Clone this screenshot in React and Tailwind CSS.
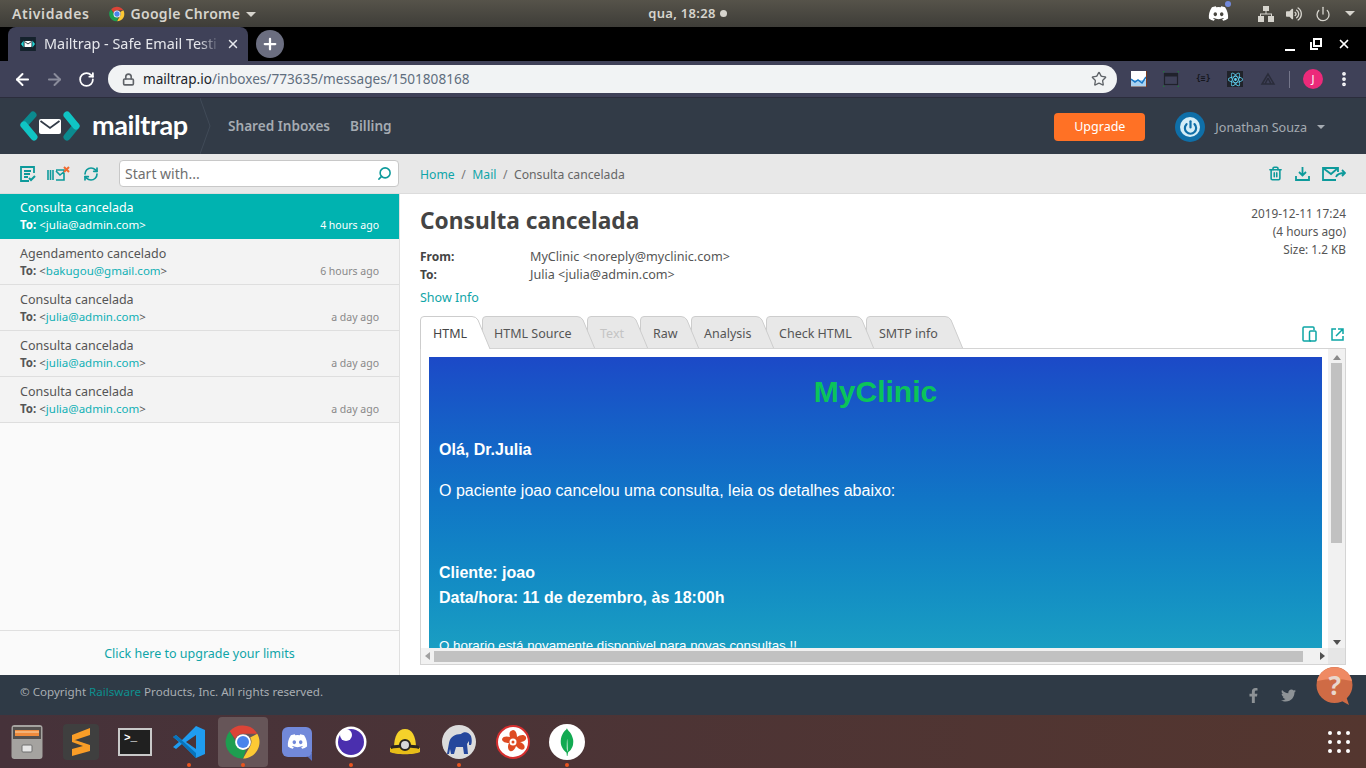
import React from "react";
import { ArrowLeft, ArrowRight, RotateCw, RefreshCw, Lock, X, Plus, Star, Power, Trash2, Search, EllipsisVertical } from "lucide-react";
import { FaDiscord, FaFacebookF, FaTwitter, FaVolumeUp } from "react-icons/fa";
import { SiMongodb, SiReact } from "react-icons/si";

const UI = { fontFamily: '"Noto Sans", sans-serif' };

function Chrome({ size }) {
  return (
    <svg width={size} height={size} viewBox="0 0 48 48">
      <path d="M24 2a22 22 0 0 1 19.05 11H24a11 11 0 0 0-10.2 6.9L6.2 9.6A22 22 0 0 1 24 2z" fill="#db4437" />
      <path d="M43.05 13A22 22 0 0 1 24 46l9.5-16.5A11 11 0 0 0 33.5 18z" fill="#fcc934" />
      <path d="M24 46A22 22 0 0 1 6.2 9.6l9.5 16.5A11 11 0 0 0 28 34.3z" fill="#1e9e50" />
      <circle cx="24" cy="24" r="10.5" fill="#fff" />
      <circle cx="24" cy="24" r="8" fill="#4a84ec" />
    </svg>
  );
}

function TopBar() {
  return (
    <div className="flex h-[27px] items-center bg-gradient-to-b from-[#56534a] to-[#3e3d38] text-[14px] tracking-[0.6px] text-[#d6d4cd]" style={UI}>
      <span className="ml-3 font-semibold">Atividades</span>
      <span className="ml-[20px] flex items-center">
        <Chrome size={16} />
        <span className="ml-[5px] font-semibold tracking-[0.3px]">Google Chrome</span>
        <span className="ml-[6px] mt-px h-0 w-0 border-x-[5px] border-t-[5px] border-x-transparent border-t-[#d6d4cd]" />
      </span>
      <span className="ml-[392px] flex items-center whitespace-nowrap text-[13px] font-semibold tracking-[0.3px]">
        qua, 18:28
        <span className="ml-[4px] h-[7px] w-[7px] rounded-full bg-[#d6d4cd]" />
      </span>
      <span className="relative ml-auto">
        <FaDiscord size={21} className="text-white" />
        <span className="absolute -right-0.5 -top-0.5 h-[6px] w-[6px] rounded-full bg-[#7289da]" />
      </span>
      <svg className="ml-[29px]" width="16" height="16" viewBox="0 0 16 16" fill="#d6d4cd">
        <rect x="5" y="0" width="6" height="5" />
        <rect x="0" y="10" width="6" height="6" />
        <rect x="10" y="10" width="6" height="6" />
        <path d="M7.5 5h1v2.5H14V10h-1V8.5H3V10H2V7.5h5.5z" />
      </svg>
      <FaVolumeUp size={16} className="ml-[12px] text-[#d6d4cd]" />
      <Power size={16} strokeWidth={2} className="ml-[13px] text-[#d6d4cd]" />
      <span className="ml-[14px] mr-[11px] h-0 w-0 border-x-[5px] border-t-[5px] border-x-transparent border-t-[#d6d4cd]" />
    </div>
  );
}

function TabStrip() {
  return (
    <div className="flex h-[34px] items-end bg-black" style={UI}>
      <div className="ml-2 flex h-[34px] w-[240px] items-center rounded-t-lg bg-[#3f4158] pl-[12px] pr-2 text-[14.4px] text-[#e6e7ec]">
        <svg width="16" height="14" viewBox="0 0 18 16" className="shrink-0">
          <rect width="18" height="16" fill="#15222c" />
          <path d="M1 8l3-4v8zM17 8l-3-4v8z" fill="#22d6d6" />
          <rect x="5" y="4.500" width="8" height="7" rx="1" fill="#fff" />
          <path d="M5.500 5.500L9 8l3.500-2.500" fill="none" stroke="#15222c" />
        </svg>
        <span className="ml-[8px] w-[176px] overflow-hidden whitespace-nowrap [mask-image:linear-gradient(to_right,black_88%,transparent)]">Mailtrap - Safe Email Testi</span>
        <X size={14} strokeWidth={2.5} className="ml-auto" />
      </div>
      <div className="mb-[3px] ml-2 flex h-7 w-7 items-center justify-center rounded-full bg-[#6b6e80] text-white">
        <Plus size={18} strokeWidth={3} />
      </div>
      <div className="mb-[7px] ml-auto flex h-[20px] items-center gap-[15px] pr-[15px] text-white">
        <span className="mt-3 h-[2px] w-[10px] bg-white" />
        <svg width="12" height="12" viewBox="0 0 12 12" fill="none" stroke="#fff" strokeWidth="2">
          <rect x="4" y="1" width="7" height="7" />
          <path d="M8 11H1V4" />
        </svg>
        <X size={14} strokeWidth={3} />
      </div>
    </div>
  );
}

function Toolbar() {
  return (
    <div className="flex h-[37px] items-center border-b border-[#2b2d3c] bg-[#3f4158]" style={UI}>
      <ArrowLeft size={19} strokeWidth={2.5} className="ml-[13px] text-white" />
      <ArrowRight size={19} strokeWidth={2.5} className="ml-[13px] text-[#8a8c9b]" />
      <RotateCw size={17} strokeWidth={2.5} className="ml-[14px] text-white" />
      <div className="ml-[13px] flex h-7 w-[1009px] items-center rounded-full bg-[#f1f3f4] pl-[14px] text-[13.6px]">
        <Lock size={13} strokeWidth={3} className="text-[#5f6368]" />
        <span className="ml-[8px] text-[#20242a]">mailtrap.io</span>
        <span className="text-[#5f6e7e]">/inboxes/773635/messages/1501808168</span>
        <Star size={16} strokeWidth={2} className="ml-auto mr-[10px] text-[#5f6368]" />
      </div>
      <svg className="ml-[14px]" width="16" height="16" viewBox="0 0 16 16">
        <rect width="16" height="16" fill="#fff" />
        <path d="M0 9h16v7H0z" fill="#a9d3f2" />
        <path d="M0 8l4 3 3-2 4 3 4-6" fill="none" stroke="#1678c8" strokeWidth="1.5" />
        <path d="M15.500 0v16H0" fill="none" stroke="#7a3b20" />
      </svg>
      <svg className="ml-[16px]" width="16" height="16" viewBox="0 0 16 16" fill="none">
        <rect x="1.500" y="2.500" width="13" height="11" stroke="#20222c" strokeWidth="1.200" />
        <rect x="2" y="3" width="12" height="2.500" fill="#20222c" />
        <path d="M0 2V0h2M14 0h2v2M0 14v2h2M14 16h2v-2" stroke="#1e7a36" />
      </svg>
      <span className="ml-[17px] w-[14px] whitespace-nowrap text-center text-[8px] font-bold text-[#15171e]" style={{ fontFamily: '"DejaVu Sans Mono", monospace' }}>{"{≡}"}</span>
      <div className="ml-[17px] flex h-4 w-4 items-center justify-center bg-[#20232a]">
        <SiReact size={15} className="text-[#61dafb]" />
      </div>
      <svg className="ml-[17px]" width="16" height="14" viewBox="0 0 16 14" fill="none" stroke="#2a2c3a" strokeWidth="1.500">
        <path d="M8 2L2 12h12zM8 6l-3 6M8 6l3 6" />
      </svg>
      <span className="ml-[13px] h-[17px] w-px bg-[#74768a]" />
      <span className="ml-[13px] flex h-5 w-5 items-center justify-center rounded-full bg-[#ec2a7a] text-[11px] text-white">J</span>
      <EllipsisVertical size={18} strokeWidth={3} className="ml-[12px] text-white" />
    </div>
  );
}

function Logo() {
  return (
    <div className="flex w-[200px] items-center pl-5">
      <svg width="60" height="30" viewBox="0 0 60 30" fill="none" strokeWidth="7">
        <path d="M13 4L4 14" stroke="#0b8a8f" strokeLinecap="round" />
        <path d="M4 14L14 26" stroke="#10c4c4" strokeLinecap="round" />
        <rect x="19" y="8" width="22" height="15" rx="2" fill="#fff" stroke="none" />
        <path d="M20.500 10l9.500 7 9.500-7" stroke="#323b47" strokeWidth="1.800" />
        <path d="M56 15L47 26" stroke="#0b8a8f" strokeLinecap="round" />
        <path d="M47 4L56 15" stroke="#10c4c4" strokeLinecap="round" />
      </svg>
      <span className="mb-[3px] ml-[12px] text-[27px] font-bold leading-none tracking-[-0.4px] text-white" style={{ fontFamily: "Lato, sans-serif" }}>mailtrap</span>
    </div>
  );
}

function Header() {
  return (
    <div className="flex h-[56px] items-center bg-[#323b47]" style={UI}>
      <Logo />
      <svg width="12" height="56" viewBox="0 0 12 56" fill="none" stroke="#414b58">
        <path d="M0 0l10 28L0 56" />
      </svg>
      <span className="ml-[16px] text-[13.6px] font-semibold text-[#a5abb2]">Shared Inboxes</span>
      <span className="ml-[20px] text-[13.6px] font-semibold text-[#a5abb2]">Billing</span>
      <button className="ml-auto mt-[2px] flex h-[28px] w-[91px] items-center justify-center rounded-sm bg-[#ff7125] pt-[1px] text-[12.5px] text-white">Upgrade</button>
      <div className="ml-[30px] mt-[2px] flex h-[30px] w-[30px] items-center justify-center rounded-full bg-[#0f6fa8]">
        <div className="flex h-[20px] w-[20px] items-center justify-center rounded-full bg-[#d5eef7]">
          <Power size={15} strokeWidth={3.500} className="text-[#0f6fa8]" />
        </div>
      </div>
      <span className="ml-[10px] mt-[4px] text-[12.600px] text-[#a5abb2]">Jonathan Souza</span>
      <span className="ml-[10px] mr-[41px] mt-[2px] h-0 w-0 border-x-[4px] border-t-[4px] border-x-transparent border-t-[#a5abb2]" />
    </div>
  );
}

const teal = "#0d9a9b";

function SubBar() {
  return (
    <div className="flex h-[40px] items-center border-b border-[#dcdcdc] bg-[#e8e8e8]" style={UI}>
      <div className="flex w-[400px] items-center">
        <svg className="ml-5" width="16" height="16" viewBox="0 0 16 16" fill="none" stroke={teal} strokeWidth="1.800">
          <path d="M14 7V1H1v14h8M4 5h7M4 8h6M4 11h4" />
          <path d="M9 12l2 2 4-4" strokeWidth="2" />
        </svg>
        <svg className="ml-[11px]" width="23" height="16" viewBox="0 0 23 16" fill="none" stroke={teal} strokeWidth="1.600">
          <path d="M1 4v10M3.500 4v10M6 4v10M9 4h8v10H9M9 5l4 4 5-4" />
          <path d="M17 1l5 5M22 1l-5 5" stroke="#f26a2e" strokeWidth="2" />
        </svg>
        <RefreshCw size={16} strokeWidth={2.500} className="ml-[13px]" style={{ color: teal }} />
        <div className="ml-[20px] flex h-[27px] w-[280px] items-center rounded-sm border border-[#c8c8c8] bg-white pl-[5px] pr-[6px] text-[14px] text-[#6f6f6f]">
          Start with...
          <Search size={15} strokeWidth={2.500} className="ml-auto -scale-x-100" style={{ color: teal }} />
        </div>
      </div>
      <div className="ml-5 mt-[4px] flex items-center text-[12.200px]">
        <span className="text-[#0fa5a8]">Home</span>
        <span className="mx-[6.500px] text-[#777]">/</span>
        <span className="text-[#0fa5a8]">Mail</span>
        <span className="mx-[6.500px] text-[#777]">/</span>
        <span className="text-[#666]">Consulta cancelada</span>
      </div>
      <div className="ml-auto mr-[20px] flex items-center gap-[12px]" style={{ color: teal }}>
        <Trash2 size={15} strokeWidth={2.500} />
        <svg width="15" height="15" viewBox="0 0 15 15" fill="none" stroke={teal} strokeWidth="1.800">
          <path d="M7.500 1v8M4 6l3.500 3.500L11 6M1 10v4h13v-4" />
        </svg>
        <svg width="24" height="14" viewBox="0 0 24 14" fill="none" stroke={teal} strokeWidth="1.800">
          <path d="M14 13H1V1h15v4M1 1l8 6 7-6" />
          <path d="M14 10c1-3 4-4 9-4M20 3l3 3-3 3" />
        </svg>
      </div>
    </div>
  );
}

const MAILS = [
  ["Consulta cancelada", "julia@admin.com", "4 hours ago", true],
  ["Agendamento cancelado", "bakugou@gmail.com", "6 hours ago"],
  ["Consulta cancelada", "julia@admin.com", "a day ago"],
  ["Consulta cancelada", "julia@admin.com", "a day ago"],
  ["Consulta cancelada", "julia@admin.com", "a day ago"],
];

function MailRow({ subject, to, time, active }) {
  return (
    <div className={active ? "h-[45px] bg-[#00b3b0] pl-5 pr-5 text-white" : "h-[46px] border-b border-[#dedede] bg-[#f3f3f3] pl-5 pr-5 text-[#555]"}>
      <div className={active ? "pt-[5px] text-[12.500px] leading-[17px]" : "pt-[6px] text-[12.500px] leading-[17px]"}>{subject}</div>
      <div className="flex items-center text-[11.500px] leading-[18px]">
        <span className="font-bold">To:</span>
        <span className="ml-[3px]">&lt;<span className={active ? "text-white" : "text-[#10b0b5]"}>{to}</span>&gt;</span>
        <span className={active ? "ml-auto text-[10.500px]" : "ml-auto text-[10.500px] text-[#888]"}>{time}</span>
      </div>
    </div>
  );
}

function Sidebar() {
  return (
    <aside className="flex w-[400px] flex-col border-r border-[#e0e0e0] bg-[#fafafa]" style={UI}>
      <div className="flex-1">
        {MAILS.map((m, i) => (
          <MailRow key={i} subject={m[0]} to={m[1]} time={m[2]} active={m[3]} />
        ))}
      </div>
      <div className="flex h-[45px] items-center justify-center border-t border-[#e0e0e0] pt-[2px] text-[12.500px] text-[#0fa5a8]">
        Click here to upgrade your limits
      </div>
    </aside>
  );
}

const TABS = [
  ["HTML", 71, "text-[#444]", true],
  ["HTML Source", 114, "text-[#555]"],
  ["Text", 62, "text-[#c4c4c4]"],
  ["Raw", 60, "text-[#555]"],
  ["Analysis", 84, "text-[#555]"],
  ["Check HTML", 109, "text-[#555]"],
  ["SMTP info", 98, "text-[#555]"],
];

function Tab({ label, width, color, active, index }) {
  const fill = active ? "#fff" : "#e8e8e8";
  const r = width - 1;
  return (
    <div className={`relative h-[33px] shrink-0 ${index ? "-ml-[9px]" : ""}`} style={{ width, zIndex: active ? 20 : 10 - index }}>
      <svg className="absolute inset-0" width={width} height="33" viewBox={`0 0 ${width} 33`}>
        <path d={`M0.500 33V4Q0.500 0.500 4 0.500H${r - 18}Q${r - 14} 0.500 ${r - 12} 4L${r} 33`} fill={fill} stroke="#cdcdcd" />
      </svg>
      <span className={`relative block whitespace-nowrap pt-[9px] text-[12.500px] leading-[18px] ${color} ${index === 1 ? "ml-[12px]" : "ml-[13px]"}`}>{label}</span>
    </div>
  );
}

function MessageFrame() {
  const arial = { fontFamily: '"Liberation Sans", Arial, sans-serif' };
  return (
    <div className="relative z-10 -mt-px mr-5 flex h-[317px] flex-col border border-[#d4d4d4] bg-white">
      <div className="flex min-h-0 flex-1">
        <div className="min-w-0 flex-1 pl-2 pt-2">
          <div className="h-[292px] overflow-hidden bg-gradient-to-b from-[#1c49c7] to-[#1a9ec2] pl-[10px] text-white" style={arial}>
            <h1 className="-ml-[10px] pt-[17px] text-center text-[30px] font-bold leading-[36px] text-[#0bc45a]">MyClinic</h1>
            <p className="mt-[27px] text-[16px] font-bold leading-[25px]">Olá, Dr.Julia</p>
            <p className="mt-[16px] text-[16px] leading-[25px]">O paciente joao cancelou uma consulta, leia os detalhes abaixo:</p>
            <p className="mt-[57px] text-[16px] font-bold leading-[25px]">Cliente: joao</p>
            <p className="text-[16px] font-bold leading-[25px]">Data/hora: 11 de dezembro, às 18:00h</p>
            <p className="mt-[26px] text-[13.330px] leading-[20px]">O horario está novamente disponivel para novas consultas !!</p>
          </div>
        </div>
        <div className="ml-[6px] flex w-[17px] flex-col items-center bg-[#f1f1f1] pt-[6px]">
          <span className="h-0 w-0 border-x-[4px] border-b-[5px] border-x-transparent border-b-[#8a8a8a]" />
          <div className="mt-[3px] h-[180px] w-[11px] bg-[#c1c1c1]" />
          <span className="mb-[3px] mt-auto h-0 w-0 border-x-[4px] border-t-[5px] border-x-transparent border-t-[#505050]" />
        </div>
      </div>
      <div className="flex h-4 shrink-0 items-center bg-[#f1f1f1]">
        <span className="ml-[4px] h-0 w-0 border-y-[4px] border-r-[5px] border-y-transparent border-r-[#a0a0a0]" />
        <div className="ml-[4px] h-[11px] w-[869px] bg-[#c1c1c1]" />
        <span className="ml-[17px] h-0 w-0 border-y-[4px] border-l-[5px] border-y-transparent border-l-[#505050]" />
        <div className="ml-auto h-4 w-[17px] bg-[#e6e6e6]" />
      </div>
    </div>
  );
}

function Content() {
  return (
    <main className="flex min-w-0 flex-1 flex-col bg-white pl-5" style={UI}>
      <div className="flex pr-5">
        <div className="flex-1">
          <h2 className="pt-[11px] text-[22.700px] font-bold leading-[32px] text-[#444]">Consulta cancelada</h2>
          <div className="mt-[11px] flex h-[18px] items-center text-[12.600px] text-[#555]">
            <span className="w-[110px] text-[12px] font-bold text-[#444]">From:</span>
            MyClinic &lt;noreply@myclinic.com&gt;
          </div>
          <div className="flex h-[18px] items-center text-[12.600px] text-[#555]">
            <span className="w-[110px] text-[12px] font-bold text-[#444]">To:</span>
            Julia &lt;julia@admin.com&gt;
          </div>
          <div className="mt-[4px] h-[19px] text-[12.500px] leading-[19px] text-[#0fa5a8]">Show Info</div>
        </div>
        <div className="pt-[10px] text-right text-[11.800px] leading-[18px] text-[#555]">
          <div>2019-12-11 17:24</div>
          <div>(4 hours ago)</div>
          <div>Size: 1.2 KB</div>
        </div>
      </div>
      <div className="mt-[9px] flex items-end pr-5">
        {TABS.map((t, i) => (
          <Tab key={t[0]} label={t[0]} width={t[1]} color={t[2]} active={t[3]} index={i} />
        ))}
        <div className="mb-[7px] ml-auto mr-[2px] flex items-center gap-[14px]">
          <svg width="15" height="16" viewBox="0 0 15 16" fill="none" stroke="#0da5a5" strokeWidth="1.500">
            <path d="M9 15H2a1 1 0 0 1-1-1V2a1 1 0 0 1 1-1h9a1 1 0 0 1 1 1v2" />
            <rect x="7.500" y="5" width="6.500" height="10" rx="1" />
          </svg>
          <svg width="13" height="13" viewBox="0 0 13 13" fill="none" stroke="#0da5a5" strokeWidth="1.500">
            <path d="M5 1H1v11h11V8M7 1h5v5M12 1L5 8" />
          </svg>
        </div>
      </div>
      <MessageFrame />
    </main>
  );
}

function Footer() {
  return (
    <div className="relative flex h-[40px] items-center bg-[#2f3a46] pb-[6px] pl-5 text-[11.600px] text-[#a9aeb3]" style={UI}>
      <span>© Copyright <span className="text-[#0d8f8f]">Railsware</span> Products, Inc. All rights reserved.</span>
      <FaFacebookF size={15} className="ml-auto mt-[6px] text-[#8d9296]" />
      <FaTwitter size={15} className="ml-[20px] mr-[70px] mt-[6px] text-[#8d9296]" />
      <svg className="absolute right-[13px] -top-[8px]" width="37" height="38" viewBox="0 0 37 38">
        <circle cx="18.500" cy="18" r="18" fill="#cf6b45" />
        <path d="M1 14A18 18 0 0 1 36 14Q18 10 1 14z" fill="#ef8a63" />
        <path d="M24 33l9 5-3-9z" fill="#cf6b45" />
      </svg>
      <span className="absolute right-[25px] -top-[8px] text-[26px] font-bold leading-[36px] text-[#e9d7cd]">?</span>
    </div>
  );
}

function DockIcon({ children, dot, active }) {
  return (
    <div className="relative flex h-[53px] w-[54px] items-center justify-center">
      {active && <span className="absolute left-[2px] top-[2px] h-[50px] w-[50px] rounded bg-[#665558]" />}
      <span className="relative flex">{children}</span>
      {dot && <span className="absolute bottom-[1px] left-[25px] h-1 w-1 rounded-full bg-[#e9541f]" />}
    </div>
  );
}

function Dock() {
  return (
    <div className="flex h-[53px] items-center bg-gradient-to-r from-[#46323a] to-[#54362f]">
      <DockIcon>
        <svg width="32" height="34" viewBox="0 0 32 34">
          <rect x="0.500" width="31" height="34" rx="3" fill="#a5a3a0" />
          <rect x="2" y="2" width="28" height="12" fill="#55514f" />
          <rect x="4" y="5" width="24" height="6" fill="#ef8b3c" />
          <path d="M4 7h24" stroke="#f8d8b0" />
          <rect x="11" y="20" width="10" height="7" rx="1" fill="#e6e6e6" stroke="#6f6f6f" />
        </svg>
      </DockIcon>
      <DockIcon>
        <div className="flex h-9 w-9 items-center justify-center rounded bg-[#3f3f3f]">
          <svg width="20" height="28" viewBox="0 0 20 28" fill="#f99d27">
            <path d="M19 0v7L1 13V7zM1 11l18 6v6L1 28v-7l11-3-11-4z" />
          </svg>
        </div>
      </DockIcon>
      <DockIcon>
        <div className="flex h-7 w-[34px] flex-col items-start border-[2px] border-[#c9c9c9] bg-[#202020] pl-[4px] pt-[3px] text-[11px] leading-[10px] text-white" style={{ fontFamily: '"Liberation Mono", monospace' }}>
          <span className="font-bold">&gt;_</span>
        </div>
      </DockIcon>
      <DockIcon dot>
        <svg width="32" height="32" viewBox="0 0 32 32">
          <path d="M23 0L9 14l-6-5-3 2 6 5-6 5 3 2 6-5 14 14 9-4V4z" fill="#1f9cf0" />
          <path d="M23 9L13 16l10 7z" fill="#4b3336" />
          <path d="M0 11l3-2 20 18v5L9 18z" fill="#0065a9" opacity=".75" />
        </svg>
      </DockIcon>
      <DockIcon dot active>
        <Chrome size={36} />
      </DockIcon>
      <DockIcon>
        <svg className="absolute right-0 -bottom-[4px]" width="8" height="8" viewBox="0 0 8 8">
          <path d="M0 0h8v8z" fill="#5a70c0" />
        </svg>
        <div className="relative flex h-[30px] w-[30px] items-center justify-center rounded-md bg-[#7289da]">
          <FaDiscord size={21} className="text-white" />
        </div>
      </DockIcon>
      <DockIcon dot>
        <svg width="32" height="32" viewBox="0 0 32 32">
          <circle cx="16" cy="16" r="15.500" fill="#fff" />
          <circle cx="16" cy="16" r="13" fill="#4a2fae" />
          <circle cx="11" cy="9" r="6" fill="#fff" />
        </svg>
      </DockIcon>
      <DockIcon>
        <svg width="30" height="28" viewBox="0 0 30 28">
          <path d="M4 20C4 8 8 1 15 1s11 7 11 19z" fill="#f5d22a" />
          <path d="M0 20c5-2 25-2 30 0v4c-5 3-25 3-30 0z" fill="#e6bd18" />
          <path d="M1 18c6-2 22-2 28 0v3c-6-2-22-2-28 0z" fill="#2a2620" />
          <circle cx="15" cy="17" r="5" fill="#d8d8d8" stroke="#2a2620" strokeWidth="2" />
        </svg>
      </DockIcon>
      <DockIcon dot>
        <svg width="34" height="34" viewBox="0 0 34 34">
          <circle cx="17" cy="17" r="17" fill="#dcdcdc" />
          <path d="M5 29l2-11c1-6 6-9 12-9 3-3 8-2 10 2 1 3 1 7 0 9h-2v-4l-2 3 1 10h-4l-1-7h-7l-2 7H9l-1-5-1 5z" fill="#25479c" />
        </svg>
      </DockIcon>
      <DockIcon>
        <svg width="34" height="34" viewBox="0 0 34 34">
          <circle cx="17" cy="17" r="16" fill="#fff" stroke="#d62f2f" strokeWidth="2" />
          <path d="M17 5c3 0 4 4 4 7 3-2 7-3 9 0 1 3-3 5-6 5 3 1 6 4 4 7-3 2-6-1-8-3-1 3-3 6-6 5-3-2-2-6-1-8-3 0-7-1-7-4 1-3 5-3 8-2-1-3-1-6 3-7z" fill="#de4b23" />
          <circle cx="17" cy="17" r="3.500" fill="#fff" />
          <circle cx="17" cy="17" r="1.500" fill="#de4b23" />
        </svg>
      </DockIcon>
      <DockIcon dot>
        <div className="flex h-9 w-9 items-center justify-center rounded-full bg-white">
          <SiMongodb size={28} className="text-[#13aa52]" />
        </div>
      </DockIcon>
      <div className="ml-auto mr-[16px] grid grid-cols-3 gap-[5px]">
        {Array.from({ length: 9 }).map((_, i) => (
          <span key={i} className="h-1 w-1 rounded-full bg-white" />
        ))}
      </div>
    </div>
  );
}

export default function App() {
  return (
    <div className="flex h-[768px] w-[1366px] flex-col overflow-hidden">
      <TopBar />
      <TabStrip />
      <Toolbar />
      <Header />
      <SubBar />
      <div className="flex min-h-0 flex-1">
        <Sidebar />
        <Content />
      </div>
      <Footer />
      <Dock />
    </div>
  );
}
